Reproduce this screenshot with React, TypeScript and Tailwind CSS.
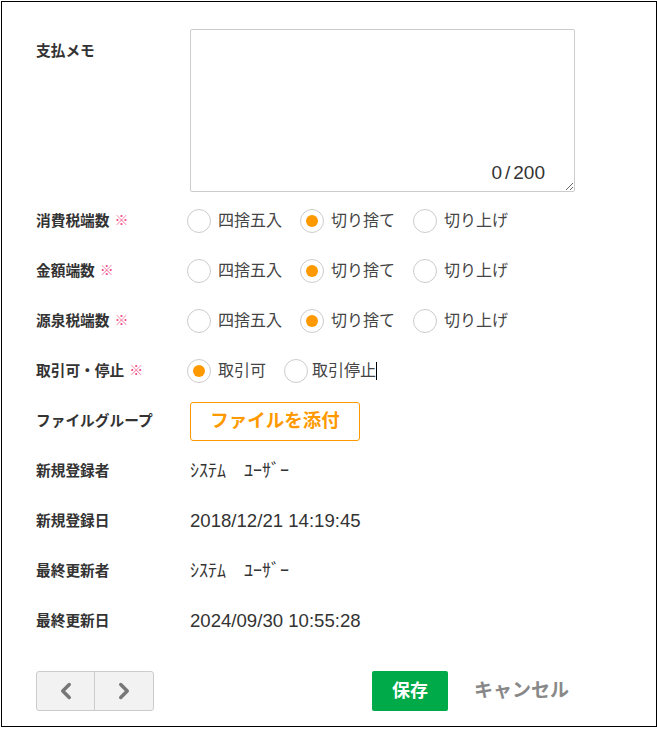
import React from 'react';
import { ChevronLeft, ChevronRight } from 'lucide-react';

const font = { fontFamily: '"Liberation Sans", "Noto Sans CJK JP", sans-serif' };

type RadioProps = { label: string; checked?: boolean };

const Radio: React.FC<RadioProps> = ({ label, checked }) => (
  <label className="flex items-center mr-[18px]">
    <span className="w-[24px] h-[24px] rounded-full border border-[#cccccc] bg-white flex items-center justify-center">
      {checked && <span className="w-[12px] h-[12px] rounded-full bg-[#ff9900]" />}
    </span>
    <span className="ml-[7px] text-[16px] text-[#444444]">{label}</span>
  </label>
);

const Label: React.FC<{ text: string; required?: boolean }> = ({ text, required }) => (
  <div className="w-[154px] shrink-0 text-[14.7px] font-bold text-[#333333] flex items-center">
    {text}
    {required && <span className="ml-[5px] text-[14px] text-[#f0508a] font-normal">※</span>}
  </div>
);

const Row: React.FC<{ children: React.ReactNode }> = ({ children }) => (
  <div className="flex items-center h-[50px]">{children}</div>
);

const rounding = ['四捨五入', '切り捨て', '切り上げ'];

export default function App() {
  return (
    <div className="p-px bg-white" style={font}>
      <div className="w-[656px] h-[726px] border border-black bg-white pl-[34px] pt-[27px]">
        {/* 支払メモ */}
        <div className="flex">
          <div className="w-[154px] shrink-0 pt-[11px] text-[14.7px] font-bold text-[#333333]">支払メモ</div>
          <div className="relative w-[385px] h-[163px]">
            <textarea className="w-full h-full border border-[#cccccc] rounded-[2px] outline-none p-2" />
            <span className="absolute right-[30px] bottom-[5px] text-[19px] text-[#333333]">
              0<span className="mx-[3px]">/</span>200
            </span>
          </div>
        </div>

        <div className="mt-[4px]">
          <Row>
            <Label text="消費税端数" required />
            <div className="flex -ml-[3px]">
              {rounding.map((r) => (
                <Radio key={r} label={r} checked={r === '切り捨て'} />
              ))}
            </div>
          </Row>
          <Row>
            <Label text="金額端数" required />
            <div className="flex -ml-[3px]">
              {rounding.map((r) => (
                <Radio key={r} label={r} checked={r === '切り捨て'} />
              ))}
            </div>
          </Row>
          <Row>
            <Label text="源泉税端数" required />
            <div className="flex -ml-[3px]">
              {rounding.map((r) => (
                <Radio key={r} label={r} checked={r === '切り捨て'} />
              ))}
            </div>
          </Row>
          <Row>
            <Label text="取引可・停止" required />
            <div className="flex -ml-[3px] items-center">
              <Radio label="取引可" checked />
              <label className="flex items-center">
                <span className="w-[24px] h-[24px] rounded-full border border-[#cccccc] bg-white" />
                <span className="ml-[4px] text-[16px] text-[#444444]">取引停止</span>
                <span className="w-px h-[18px] bg-black" />
              </label>
            </div>
          </Row>
          <Row>
            <Label text="ファイルグループ" />
            <button className="w-[170px] h-[39px] border border-[#ff9900] rounded-[3px] text-[18.5px] font-bold text-[#ff9900]">
              ファイルを添付
            </button>
          </Row>
          <Row>
            <Label text="新規登録者" />
            <span className="text-[18px] text-[#333333]">ｼｽﾃﾑ　ﾕｰｻﾞｰ</span>
          </Row>
          <Row>
            <Label text="新規登録日" />
            <span className="text-[18.6px] text-[#333333]">2018/12/21 14:19:45</span>
          </Row>
          <Row>
            <Label text="最終更新者" />
            <span className="text-[18px] text-[#333333]">ｼｽﾃﾑ　ﾕｰｻﾞｰ</span>
          </Row>
          <Row>
            <Label text="最終更新日" />
            <span className="text-[18.6px] text-[#333333]">2024/09/30 10:55:28</span>
          </Row>
        </div>

        <div className="flex items-center mt-[25px]">
          <div className="flex h-[40px] border border-[#cccccc] rounded-[3px] bg-[#f2f2f2]">
            <button className="w-[58px] flex items-center justify-center border-r border-[#cccccc] text-[#777777]">
              <ChevronLeft size={26} strokeWidth={3.2} />
            </button>
            <button className="w-[58px] flex items-center justify-center text-[#777777]">
              <ChevronRight size={26} strokeWidth={3.2} />
            </button>
          </div>
          <button className="ml-[218px] w-[76px] h-[40px] rounded-[2px] bg-[#00aa48] text-white text-[18px] font-bold">
            保存
          </button>
          <button className="ml-[26px] text-[19px] font-bold text-[#888888]">キャンセル</button>
        </div>
      </div>
    </div>
  );
}
